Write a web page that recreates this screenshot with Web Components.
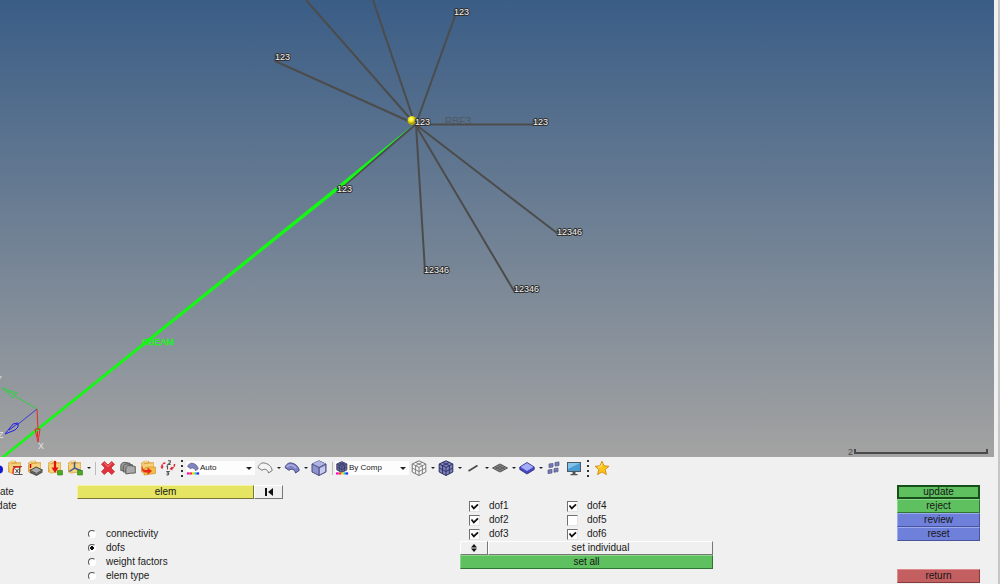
<!DOCTYPE html>
<html lang="en">
<head>
<meta charset="utf-8">
<title>Element update panel</title>
<style>
  body { margin: 0; background: #f0f0f0; color: #1c1c1c; font: 10px/14px "Liberation Sans", Arial, sans-serif; }
</style>
</head>
<body>
<modeler-app></modeler-app>

<script>
const define = (name, html, setup) => {
  const template = document.createElement('template');
  template.innerHTML = html;
  customElements.define(name, class extends HTMLElement {
    connectedCallback() {
      if (this.shadowRoot) return;
      this.attachShadow({ mode: 'open' }).append(template.content.cloneNode(true));
      if (setup) setup(this, this.shadowRoot);
    }
  });
};

/* ---------- icon drawings, all on a 16 x 16 grid ---------- */
const folder = '<path d="M1 3 4.500 .8h4l1 1.500h4.500V12L4 13.500 1 12z" fill="#dca548"/><path d="M1.600 4.500 13.400 3.200V11.800L3 12.800z" fill="#f7d27c"/><path d="M2 4.500 4.500 1.800h3.500" fill="none" stroke="#fff0bd"/>';
const surface = (fill, line) => `<path d="M1 7.500C2 4.500 4.500 2.500 7 3c4 .5 7.500 3 8.200 7.500L11.500 13C11 10 8.500 8.600 6.200 9.600L5 10.300z" fill="${fill}" stroke="${line}"/>`;
const meshCube = (fill, line) => `<path d="M8 .8 14.800 4v8L8 15.500 1.200 12V4z" fill="${fill}" stroke="${line}"/><path d="M1.200 4 8 7.400 14.800 4M8 7.400v8M4.600 2.400 11.400 5.700v8M11.400 2.400 4.600 5.700v8M1.200 8 8 11.500 14.800 8" fill="none" stroke="${line}" stroke-width=".9"/>`;
const spectrum = '<path d="M1 13h3v2.500H1z" fill="#f0c"/><path d="M4 13h3v2.500H4z" fill="#e33"/><path d="M7 13h3v2.500H7z" fill="#dd0"/><path d="M10 13h2v2.500h-2z" fill="#0cb"/><path d="M12 13h3v2.500h-3z" fill="#22f"/>';
const ICONS = {
  ball: '<circle cx="-1" cy="9.500" r="4" fill="#1515d0"/>',
  cardReview: folder + '<path d="M7 7.500h6v7H7z" fill="#eee"/><path d="M6 6.500h9M12.500 7v8M6.500 14.500h9M8.500 9l3 4M11.500 9l-3 4" stroke="#555" fill="none"/><path d="M6 14c0-4 0-7 3-7h5" fill="none" stroke="#e5281c" stroke-width="1.300"/>',
  layers: folder + '<path d="M3.500 4v4M3.500 9.500v1.500" stroke="#c00" stroke-width="1.500"/><path d="M3 10.500 9 7l6.500 3L9.500 13.500z" fill="#aaa" stroke="#444"/><path d="M3 11v2l6.500 3 6-3.500v-2L9.500 14z" fill="#555"/>',
  importPart: folder + '<path d="M8 1v8" stroke="#e01212" stroke-width="2.200"/><path d="M4.500 7.500h7L8 13z" fill="#e01212"/><path d="M10.500 10.500h5v4.500h-5z" fill="#4aaa22" stroke="#337d17" stroke-width=".6"/>',
  axes: folder + '<path d="M7.500 2v6L2.500 11.500M7.500 8l7 3" stroke="#40599a" stroke-width="1.500" fill="none"/><path d="M10.500 10.500h5v4.500h-5z" fill="#4aaa22" stroke="#337d17" stroke-width=".6"/>',
  remove: '<path d="M4.300 1.500 8 5l3.700-3.500 2.800 2.800L11 8l3.500 3.800-2.800 2.700L8 11l-3.700 3.500-2.800-2.700L5 8 1.500 4.300z" fill="#e2333d" stroke="#b91b25" stroke-width=".7"/><path d="M4.300 3 8 6.500 11.700 3" fill="none" stroke="#f68b8d"/>',
  stack: '<g fill="#999" stroke="#555" stroke-width=".9"><path d="M.8 10.500V5.500C1 3 3 2 6 2.500l4 .8v8z"/><path d="M3.300 12V7c.2-2.500 2.200-3.500 5.200-3l4 .8v7.500z"/><path d="M5.800 14V8.700c.2-2.500 2.200-3.500 5.200-3l4.300.8v6.500l-5 .3z" fill="#aaa"/></g>',
  openFolder: folder + '<path d="M4 15V8.500l3-1.500h8.500v6.500z" fill="#f3bd4c" stroke="#c98c22" stroke-width=".6"/><path d="M2.500 5c-.5 4 1.500 5.500 5 5V7.500L12 11l-4.500 3.800v-2.300C3 13 .5 10 2.500 5z" fill="#e92b18"/>',
  renumber: '<path d="M8 .8h2.300v1.700L8 4.500h2.700M6.500 6.500l1-.5v3.500M6.300 11.500h2.700L7.500 13c2 0 1.500 2.300-1 1.800" fill="none" stroke="#555" stroke-width="1.100"/><path d="M2 7c0-3 1-4 3.500-4M14.500 4c0 3-1 4-3 4.500" stroke="#df2634" stroke-width="1.500" stroke-dasharray="2.500 1" fill="none"/><path d="M.3 6.500h3.500L2 9.300zM12 6.500l.5 4L9.500 9z" fill="#df2634"/>',
  wireSurface: surface('#f4f4f4', '#777'),
  shadedSurface: surface('#7f83c5', '#45487f') + '<path d="M3 7C5 3.800 9 4.500 12 8" fill="none" stroke="#adb0e3" stroke-width="1.500"/>',
  surfaceMode: '<g transform="translate(1 0) scale(.85)">' + surface('#8086c2', '#575a85') + '</g>' + spectrum,
  cubeMode: '<g transform="translate(1 0) scale(.85)">' + meshCube('#6a6ea8', '#292c50') + '</g>' + spectrum,
  cube: '<path d="M8 .8 15 4v8l-7 3.500L1 12V4z" fill="#8c93cf" stroke="#484b7b"/><path d="M1 4 8 .8 15 4 8 7.500z" fill="#aeb3e4"/><path d="M9 8.300 14 6v5.500l-5 2.700z" fill="#c6caee"/><path d="M1 4l7 3.500L15 4M8 7.500v8" fill="none" stroke="#484b7b"/>',
  wireMesh: meshCube('#f6f6f6', '#777'),
  shadedMesh: meshCube('#7c81c0', '#2c2f59'),
  line: '<path d="M3.500 11 12.500 5.500" stroke="#4a4a4a" stroke-width="1.700"/>',
  plate: '<path d="M.5 8 8 4l7.500 4L8 12z" fill="#8a8a8a" stroke="#555"/><path d="M3 6.700l7.500 4M5.500 5.300 13 9.300M3 9.300l7.500-4M5.500 10.700l7.500-4" stroke="#555" stroke-width=".8"/>',
  solid: '<path d="M.8 7 8 2.500 15.200 7v2.500L8 14 .8 9.500z" fill="#4549c4" stroke="#24276f" stroke-width=".8"/><path d="M1.500 7 8 3l6.500 4L8 11z" fill="#a5adfb"/>',
  elements: '<g fill="#777bb5" stroke="#50537f" stroke-width=".7"><path d="M3 4l4-.6V7l-4 .6zM9 2.500l4-.6V5.500L9 6.100zM2 10l4-.6V13l-4 .6zM8 8.600l4-.6v3.600l-4 .6z"/></g>',
  monitor: '<path d="M1 2h14v10H1z" fill="#4b5964"/><path d="M2 3h12v8H2z" fill="#4c9bd3"/><path d="M2 3h12L2 9z" fill="#83c2eb"/><path d="M6.500 12h3v2h2v1.200h-7V14h2z" fill="#555"/>',
  star: '<path d="M8 1.200l2 4.600 5 .5-3.800 3.300 1.200 5L8 12l-4.400 2.600 1.200-5L1 6.300l5-.5z" fill="#fcc41a" stroke="#cf8a10" stroke-width=".9"/><path d="M8 3.500 6.800 6.800 4 7.200" fill="none" stroke="#fff09a"/>'
};
const svgFor = name => `<svg viewBox="0 0 16 16" aria-hidden="true">${ICONS[name]}</svg>`;

define('tool-button', `
  <style>
    :host { display: flex; flex: none; width: 20px; overflow: hidden; }
    :host([cut]) { width: 5px; }
    button { all: unset; display: flex; justify-content: center; width: 100%; }
    svg { flex: none; width: 16px; height: 16px; }
    :host([cut]) button { justify-content: flex-start; }
  </style><button type="button"></button>`, (host, root) => {
  const b = root.querySelector('button');
  b.setAttribute('aria-label', host.getAttribute('icon'));
  b.innerHTML = svgFor(host.getAttribute('icon'));
});

define('menu-arrow', `
  <style>
    :host { display: flex; flex: none; width: 7px; }
    button { all: unset; display: flex; justify-content: center; align-items: center; width: 100%; height: 16px; }
    i { border: 2px solid transparent; border-top-color: #222; border-bottom: 0; }
  </style><button type="button" aria-label="more options"><i></i></button>`);

define('tool-divider', `
  <style>
    :host { display: flex; flex: none; justify-content: center; width: 6px; }
    i { width: 1px; height: 13px; background: #bbb; }
    :host([grip]) { width: 8px; }
    :host([grip]) i { width: 2px; height: 17px; background: repeating-linear-gradient(#333 0 2px, transparent 2px 5px); }
  </style><i></i>`);

define('mode-select', `
  <style>
    :host { display: flex; flex: none; align-items: center; width: 69px; height: 14px; background: #fdfdfd; }
    :host([wide]) { width: 74px; }
    svg { flex: none; width: 14px; height: 14px; }
    select { appearance: none; flex: 1; min-width: 0; height: 14px; margin: 0; padding: 0; border: 0; border-radius: 0;
      color: #222; background: none; font: 8px/14px "Liberation Sans", sans-serif; }
    i { margin-right: 3px; border: 3px solid transparent; border-top-color: #222; border-bottom: 0; }
  </style><select></select><i></i>`, (host, root) => {
  const s = root.querySelector('select');
  s.setAttribute('aria-label', 'display mode');
  s.add(new Option(host.getAttribute('value')));
  s.insertAdjacentHTML('beforebegin', svgFor(host.getAttribute('icon')));
});

define('view-toolbar', `
  <style>
    :host { display: flex; align-items: center; height: 22px; overflow: hidden; }
  </style>
  <tool-button cut icon="ball"></tool-button>
  <tool-button icon="cardReview"></tool-button><tool-button icon="layers"></tool-button>
  <tool-button icon="importPart"></tool-button><tool-button icon="axes"></tool-button><menu-arrow></menu-arrow>
  <tool-divider></tool-divider>
  <tool-button icon="remove"></tool-button><tool-button icon="stack"></tool-button>
  <tool-button icon="openFolder"></tool-button><tool-button icon="renumber"></tool-button>
  <tool-divider grip></tool-divider>
  <mode-select icon="surfaceMode" value="Auto"></mode-select>
  <tool-button icon="wireSurface"></tool-button><menu-arrow></menu-arrow>
  <tool-button icon="shadedSurface"></tool-button><menu-arrow></menu-arrow>
  <tool-button icon="cube"></tool-button>
  <tool-divider></tool-divider>
  <mode-select wide icon="cubeMode" value="By Comp"></mode-select>
  <tool-button icon="wireMesh"></tool-button><menu-arrow></menu-arrow>
  <tool-button icon="shadedMesh"></tool-button><menu-arrow></menu-arrow>
  <tool-button icon="line"></tool-button><menu-arrow></menu-arrow>
  <tool-button icon="plate"></tool-button><menu-arrow></menu-arrow>
  <tool-button icon="solid"></tool-button><menu-arrow></menu-arrow>
  <tool-button icon="elements"></tool-button><tool-button icon="monitor"></tool-button>
  <tool-divider grip></tool-divider>
  <tool-button icon="star"></tool-button>`);

/* ---------- 3D view ---------- */
define('model-view', `
  <style>
    :host { display: block; margin-right: 4px; background: linear-gradient(#3a5d86, #a3a3a2); }
    svg { display: block; width: 100%; height: auto; }
    text { font: 9px "Liberation Sans", sans-serif; }
    .dof text { fill: #f2f2f2; stroke: #303030; stroke-width: 2px; paint-order: stroke; }
    .arms { stroke: #4c4c4c; stroke-width: 2; fill: none; }
  </style>
  <svg viewBox="0 0 994 457" role="img" aria-label="RBE3 element with CBEAM">
    <defs><radialGradient id="ball" cx=".4" cy=".35"><stop offset="0" stop-color="#ffff9a"/><stop offset=".5" stop-color="#f4ee1c"/><stop offset="1" stop-color="#a89c10"/></radialGradient></defs>
    <text x="445" y="125" style="font-size:10px" fill="#505860">RBE3</text>
    <path class="arms" d="M415 124 306 0M415 124 373 0M416 124 455 16M415 124 275 61M415 124.500H534M415 124 557 233M415 124 514 291M416 124 425 271M415 125 340 189"/>
    <path d="M414 124 340 184 1 457 5 457 342 187z" fill="#14f814"/>
    <text x="142" y="345" fill="#14f814" stroke="#14f814" stroke-width=".3">CBEAM</text>
    <circle cx="412" cy="120.500" r="4.500" fill="url(#ball)"/>
    <g class="dof">
      <text x="454" y="15">123</text><text x="275" y="60">123</text><text x="415" y="125">123</text>
      <text x="533" y="125">123</text><text x="337" y="192">123</text><text x="557" y="235">12346</text>
      <text x="424" y="273">12346</text><text x="514" y="292">12346</text>
    </g>
    <g fill="none">
      <path d="M37 409 15 396M2 388 17 393 13 398zM7 391l8 4" stroke="#30d044"/>
      <path d="M37 409 17 425" stroke="#3c3cd8"/>
      <path d="M5 434 13 424 18 423 18 427 15 430zM9 430l8-6" stroke="#2222e8"/>
      <path d="M37 409 38 430M35 429h5L38 442zM37.500 431v6" stroke="#ee2424"/>
    </g>
    <g fill="#e4e4e4"><text x="38" y="449">X</text><text x="-2" y="438">Z</text><text x="-4" y="382">Y</text></g>
    <text x="848" y="455" font-weight="bold" fill="#4a4a4a">2</text>
    <path d="M855 449v4H987V449" fill="none" stroke="#4a4a4a" stroke-width="2"/>
  </svg>`);

/* ---------- panel controls ---------- */
define('panel-button', `
  <style>
    :host { display: flex; height: 14px; --face: #f0f0f0; --hi: #fff; --lo: #777; }
    :host([tone=green]) { --face: #5fc060; --hi: #8ad68a; --lo: #2f7433; }
    :host([tone=blue]) { --face: #6f80db; --hi: #9eabf0; --lo: #48549c; }
    :host([tone=red]) { --face: #c35f60; --hi: #dd8b8b; --lo: #853c3d; }
    :host([tone=yellow]) { --face: #e5e463; --hi: #f3f2a0; --lo: #77763a; }
    button { flex: 1; min-width: 0; box-sizing: border-box; margin: 0; padding: 0; border: 1px solid; border-color: var(--hi) var(--lo) var(--lo) var(--hi);
      border-radius: 0; background: var(--face); color: #161616; font: inherit; line-height: 12px; display: flex; align-items: center; justify-content: center; }
    :host([current]) button { border-color: #174f1b; outline: 1px solid #174f1b; outline-offset: -2px; }
    ::slotted(svg) { display: block; }
  </style><button type="button"><slot></slot></button>`, (host, root) => {
  if (host.title) root.querySelector('button').setAttribute('aria-label', host.title);
});

define('check-field', `
  <style>
    :host { display: block; height: 14px; }
    label { display: flex; align-items: center; gap: 9px; }
    input { appearance: none; box-sizing: border-box; width: 11px; height: 11px; margin: 0; background: #fff;
      border: 1px solid; border-color: #707070 #e4e4e4 #e4e4e4 #707070; }
    span { display: grid; align-items: center; }
    input, svg { grid-area: 1 / 1; }
    svg { width: 11px; height: 11px; pointer-events: none; visibility: hidden; }
    input:checked + svg { visibility: visible; }
  </style>
  <label><span><input type="checkbox"><svg viewBox="0 0 11 11"><path d="M2.500 4.500 4.800 7.500 9 3.300" fill="none" stroke="#111" stroke-width="1.800"/></svg></span><slot></slot></label>`,
  (host, root) => { root.querySelector('input').checked = host.hasAttribute('checked'); });

define('mode-radios', `
  <style>
    :host { display: block; padding: 28px 0 0 11px; }
    label { display: flex; align-items: center; gap: 10px; height: 14px; white-space: nowrap; }
    input { appearance: none; flex: none; box-sizing: border-box; width: 8px; height: 8px; margin: 0; border: 1px solid;
      border-color: #555 #fff #fff #555; border-radius: 50%; background: #fff; }
    input:checked { background: radial-gradient(circle, #111 0 2px, #fff 2px); }
  </style>
  <label><input type="radio" name="mode">connectivity</label>
  <label><input type="radio" name="mode" checked>dofs</label>
  <label><input type="radio" name="mode">weight factors</label>
  <label><input type="radio" name="mode">elem type</label>`);

define('sub-panels', `
  <style>
    :host { display: block; overflow: hidden; }
    a { display: block; width: max-content; margin-left: -14px; color: inherit; text-decoration: none; }
  </style>
  <a href="#create">create</a><a href="#update">update</a>`);

define('dof-editor', `
  <style>
    :host { display: block; padding-top: 14px; }
    .dofs { display: grid; grid-template: repeat(3, 14px) / 98fr 146fr; grid-auto-flow: column; padding-left: 9px; }
    .row { display: grid; grid-template-columns: 28px 1fr; }
  </style>
  <div class="dofs">
    <check-field checked>dof1</check-field><check-field checked>dof2</check-field><check-field checked>dof3</check-field>
    <check-field checked>dof4</check-field><check-field>dof5</check-field><check-field checked>dof6</check-field>
  </div>
  <div class="row">
    <panel-button title="switch mode"><svg width="8" height="8" viewBox="0 0 8 8"><path d="M4 0 7 3.500H1zM4 8 7 4.500H1z" fill="#111"/></svg></panel-button>
    <panel-button>set individual</panel-button>
  </div>
  <panel-button tone="green">set all</panel-button>`);

define('action-column', `
  <style>
    :host { display: block; }
    .exit { margin-top: 28px; }
  </style>
  <panel-button tone="green" current>update</panel-button>
  <panel-button tone="green">reject</panel-button>
  <panel-button tone="blue">review</panel-button>
  <panel-button tone="blue">reset</panel-button>
  <panel-button class="exit" tone="red">return</panel-button>`);

define('element-panel', `
  <style>
    :host { display: grid; grid-template-columns: 77fr 206fr 177fr 253fr 184fr 83fr 18fr; padding-top: 6px; }
    .entity { display: grid; grid-template-columns: 1fr 29px; padding-bottom: 0; }
    .entity + mode-radios { margin-top: 0; }
    dof-editor { grid-column: 4; }
    action-column { grid-column: 6; }
  </style>
  <sub-panels></sub-panels>
  <div>
    <div class="entity">
      <panel-button tone="yellow">elem</panel-button>
      <panel-button title="reset selection"><svg width="8" height="8" viewBox="0 0 8 8"><path d="M0 0h2v8H0zM8 0v8L3 4z" fill="#111"/></svg></panel-button>
    </div>
    <mode-radios></mode-radios>
  </div>
  <dof-editor></dof-editor>
  <action-column></action-column>`);

define('modeler-app', `
  <style>
    :host { display: block; box-sizing: border-box; min-height: 100vh; border-right: 2px solid #c6c6c6; }
  </style>
  <model-view></model-view>
  <view-toolbar></view-toolbar>
  <element-panel></element-panel>`);
</script>
</body>
</html>
